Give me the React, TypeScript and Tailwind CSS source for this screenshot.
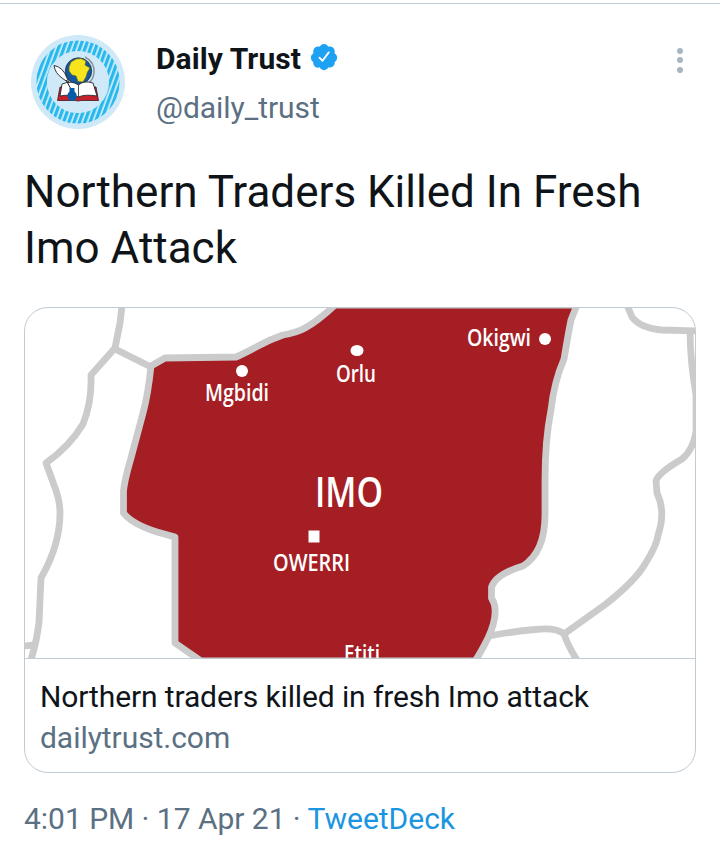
import React from 'react';

const BORDERS = [
  // west
  'M122 306 L120 323 L115 348 L91 375 Q92 402 83 424 Q70 446 46 463 L54 485 Q60 500 60 513 Q60 545 41 578 L39 622 Q37 640 31 660',
  'M115 349 L151 367',
  'M24 646 L35 645',
  // east
  'M489 636 Q515 631 535 629.500 Q556 627 564 634 Q568 646 577 660',
  'M564 634 L606 604 Q636 580 645 564 Q657 545 658 535 Q666 512 657 493 L656 481 Q658 473 682 459 Q693 450 696 432 L696 395 Q690 360 690 330',
  'M627 305 L632 317 Q640 328 662 330 L698 331',
];

const CITIES = [
  { name: 'Okigwi', x: 467, y: 346, width: 64, size: 24 },
  { name: 'Orlu', x: 336, y: 382, width: 40, size: 24 },
  { name: 'Mgbidi', x: 205, y: 401, width: 64, size: 24 },
  { name: 'IMO', x: 315, y: 507, width: 68, size: 41 },
  { name: 'OWERRI', x: 273, y: 571, width: 77, size: 24 },
  { name: 'Etiti', x: 344, y: 661.5, width: 36, size: 24 },
];

const StateMap: React.FC = () => (
  <svg viewBox="25 308 670 350" className="block w-full h-[350px]">
    <g fill="none" stroke="#cbcbcb" strokeWidth="6.800" strokeLinejoin="round">
      {BORDERS.map((d) => (
        <path key={d} d={d} />
      ))}
      <path
        fill="#a51e24"
        d="M335 305 Q318 321 305 328 Q296 333 283 335 Q271 339 258 346 Q243 354 236 357 L165 358 L151 366 Q148 395 143 413 Q138 432 131 458 Q124 482 123.500 492 L123.500 513 Q132 524 157 532 L175 537 L175 643 L201 661 L475 661 Q480 654 488 638 Q496 621 495 609 Q495 604 491.500 598 L491.500 587 Q496 574 523 566 Q545 552 545 515 L545 480 Q545 440 551 410 Q554 382 564 359 Q568 335 571 320 L577 305 Z"
      />
    </g>
    <g fill="#fff">
      <ellipse cx="545" cy="339" rx="6" ry="6" />
      <ellipse cx="357" cy="350.500" rx="6.500" ry="5.500" />
      <ellipse cx="242" cy="371" rx="6" ry="6" />
      <rect x="308.500" y="530.500" width="11" height="12" />
      {CITIES.map((c) => (
        <text
          key={c.name}
          x={c.x}
          y={c.y}
          fontSize={c.size}
          textLength={c.width}
          lengthAdjust="spacingAndGlyphs"
          className="font-['Open_Sans',sans-serif] font-semibold"
        >
          {c.name}
        </text>
      ))}
    </g>
  </svg>
);

const Avatar: React.FC = () => (
  <svg viewBox="0 0 96 96" className="size-24 shrink-0">
    <circle cx="48" cy="48" r="47" fill="#cfe9f8" />
    <defs>
      <pattern id="stripes" width="5" height="5" patternUnits="userSpaceOnUse" patternTransform="rotate(20)">
        <rect width="5" height="5" fill="#d8eefa" />
        <rect width="3.300" height="5" fill="#27b9ee" />
      </pattern>
    </defs>
    <circle cx="48" cy="48" r="36.300" fill="none" stroke="url(#stripes)" strokeWidth="10.500" />
    {/* globe */}
    <path d="M55 23 Q65 28 64 39 Q63 47 57 50" fill="none" stroke="#8b9298" strokeWidth="1.500" />
    <circle cx="48.500" cy="37" r="13.200" fill="#17579f" stroke="#183247" strokeWidth=".8" />
    <path
      d="M39 33 L41 28 L46 25 L51 24.500 L56 27 L55 31 L60 34 L57.500 38 L56 43 L53 48 L48 47.500 L46 42 L42 41 L39 37 Z"
      fill="#f7e41c"
      stroke="#54611f"
      strokeWidth=".6"
    />
    {/* book */}
    <path d="M30 53 L27.500 66.500 L45 66.500 L48 67 L51 66.500 L68.500 66.500 L66 53 Z" fill="#c5202c" stroke="#45191c" strokeWidth=".8" />
    <path
      d="M32 50 Q42 46 48.500 51 Q54 46 63 49 L67 62 Q55 60 48.500 63 Q41 60 30 62 Z"
      fill="#fff"
      stroke="#22272b"
      strokeWidth=".9"
    />
    <path d="M48.500 51 V63" stroke="#22272b" strokeWidth=".8" />
    {/* quill and ink pot */}
    <path d="M24 31.500 Q33 33 37 44 L39 49 L32 44 Q25 39 24 31.500 Z" fill="#fff" stroke="#202428" strokeWidth=".9" />
    <path d="M36 46 L42 57" stroke="#202428" strokeWidth="1" />
    <path d="M39.500 54 H44.500 V57.500 Q48 60 46 65 Q42 69 38.500 65 Q36 60 39.500 57.500 Z" fill="#075ca8" />
  </svg>
);

const VerifiedBadge: React.FC = () => (
  <svg viewBox="0 0 24 24" className="size-[30px]" fill="#1da1f2">
    <path d="M22.500 12.500c0-1.580-.875-2.950-2.148-3.600.154-.435.238-.905.238-1.400 0-2.210-1.710-3.998-3.818-3.998-.47 0-.92.084-1.336.250C14.818 2.415 13.510 1.500 12 1.500s-2.816.917-3.437 2.250c-.415-.165-.866-.250-1.336-.250-2.110 0-3.818 1.790-3.818 4 0 .494.083.964.237 1.400-1.272.650-2.147 2.018-2.147 3.600 0 1.495.782 2.798 1.942 3.486-.02.170-.032.340-.032.514 0 2.210 1.708 4 3.818 4 .47 0 .92-.086 1.335-.250.620 1.334 1.926 2.250 3.437 2.250 1.512 0 2.818-.916 3.437-2.250.415.163.865.248 1.336.248 2.110 0 3.818-1.790 3.818-4 0-.174-.012-.344-.033-.513 1.158-.687 1.943-1.990 1.943-3.484z" />
    <path d="M8.300 12.500 L10.800 15 L15.800 8.300" fill="none" stroke="#fff" strokeWidth="1.500" strokeLinecap="round" strokeLinejoin="round" />
  </svg>
);

const App: React.FC = () => {
  return (
    <div className="h-[856px] w-[720px] bg-white pt-[3px] font-['Roboto',sans-serif] text-[#0f1419]">
      <div className="border-t border-[#c0cbd3] px-6 pt-[30px]">
        <header className="flex items-start">
          <div className="ml-[6px]">
            <Avatar />
          </div>
          <div className="ml-[30px] flex-1 pt-1">
            <div className="flex h-[42px] items-center gap-2">
              <span className="text-[30px] font-bold leading-[42px] tracking-[0.08px]">Daily Trust</span>
              <div className="-mt-[4px]">
                <VerifiedBadge />
              </div>
            </div>
            <div className="mt-[7px] text-[30px] leading-[42px] tracking-[-0.05px] text-[#5b7083]">@daily_trust</div>
          </div>
          <button className="mr-[13px] mt-[14px] flex flex-col gap-[3.3px]">
            <span className="size-[6px] rounded-full bg-[#a6b5c0]" />
            <span className="size-[6px] rounded-full bg-[#a6b5c0]" />
            <span className="size-[6px] rounded-full bg-[#a6b5c0]" />
          </button>
        </header>

        <h1 className="mt-[34px] whitespace-nowrap text-[44px] leading-[56px]">
          Northern Traders Killed In Fresh
          <br />
          Imo Attack
        </h1>

        <div className="mt-[31px] h-[466px] overflow-hidden rounded-[24px] border border-[#c0cbd3]">
          <StateMap />
          <div className="border-t border-[#c0cbd3] px-[15px] pt-[17px] text-[30px] leading-[41px]">
            <div className="tracking-[-0.12px]">Northern traders killed in fresh Imo attack</div>
            <div className="tracking-[-0.05px] text-[#5b7083]">dailytrust.com</div>
          </div>
        </div>

        <div className="mt-[25px] text-[30px] leading-[42px] tracking-[-0.03px] text-[#5b7083]">
          4:01 PM · 17 Apr 21 · <span className="text-[#1b95e0]">TweetDeck</span>
        </div>
      </div>
    </div>
  );
};

export default App;
